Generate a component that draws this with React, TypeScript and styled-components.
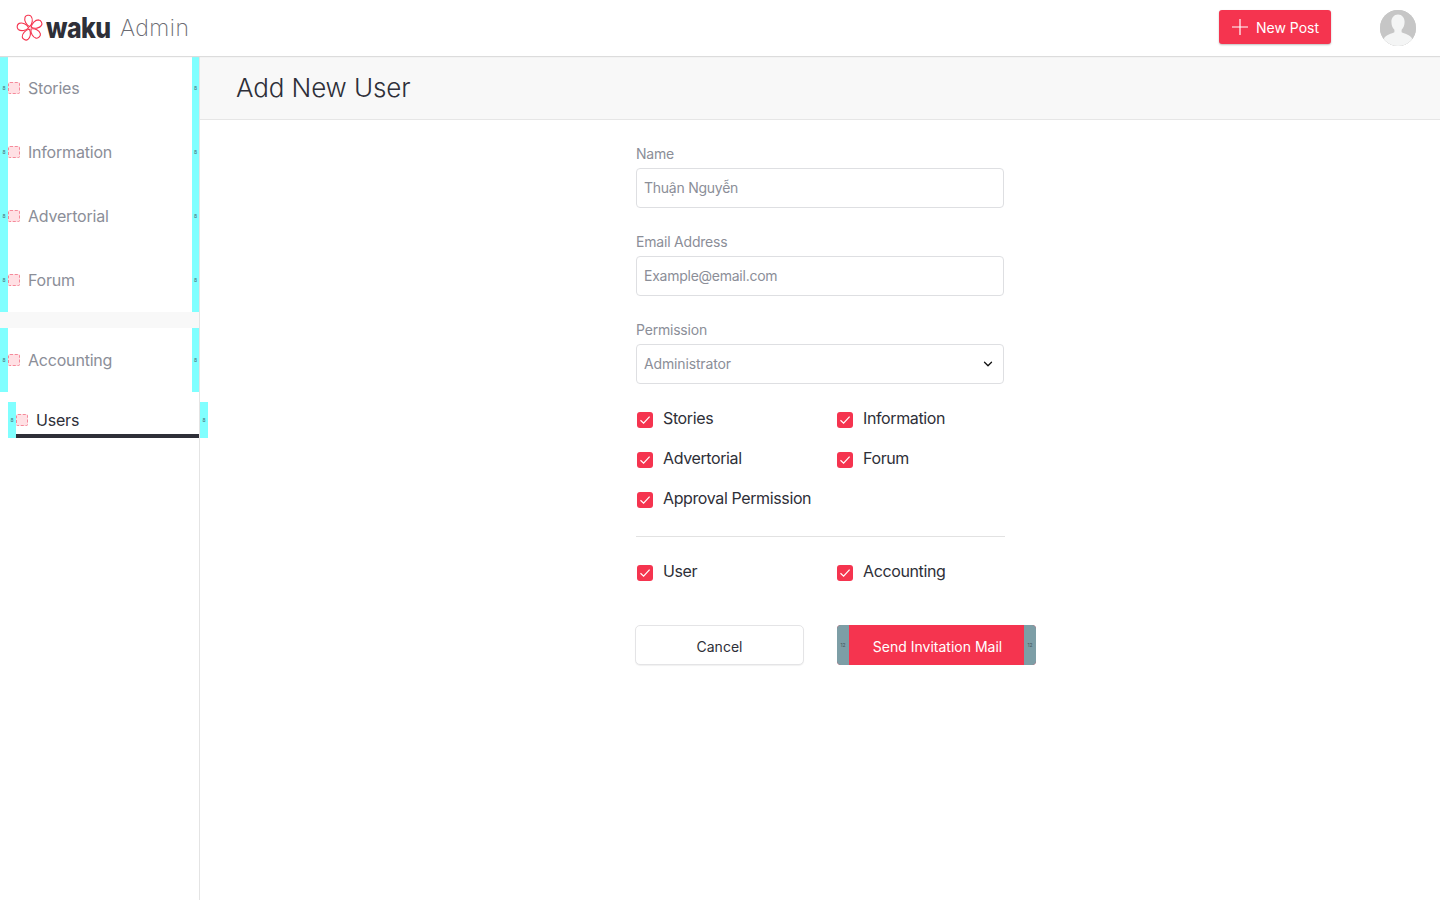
import React from 'react';
import styled, { createGlobalStyle } from 'styled-components';
import { ChevronDown } from 'lucide-react';

const RED = '#f5344f';
const INK = '#2e2f38';
const MUTED = '#8b8e98';

const GlobalStyle = createGlobalStyle`
  html, body { margin: 0; padding: 0; background: #fff; }
  body { font-family: Inter, "Noto Sans", sans-serif; color: ${INK}; }
  * { box-sizing: border-box; }
`;

const Page = styled.div`
  width: 1440px;
  height: 900px;
  display: flex;
  flex-direction: column;
  overflow: hidden;
`;

const Header = styled.header`
  height: 56px;
  flex: none;
  display: flex;
  align-items: center;
  padding: 0 24px 0 16px;
  background: #fff;
  position: relative;
  z-index: 2;
  box-shadow: 0 1px 1px #dcdcdc;
`;

const Brand = styled.div`
  display: flex;
  align-items: center;
`;

const Wordmark = styled.span`
  display: inline-block;
  width: 64px;
  margin-left: 2px;
  font-family: Inter, sans-serif;
  font-weight: 800;
  font-size: 29px;
  line-height: 32px;
  letter-spacing: -0.6px;
  color: ${INK};
  transform: scaleX(0.86);
  transform-origin: left center;
`;

const AdminMark = styled.span`
  font-family: Inter, sans-serif;
  font-weight: 200;
  font-size: 23px;
  line-height: 32px;
  letter-spacing: 0.45px;
  color: #6a6b72;
  margin-left: 10px;
`;

const NewPost = styled.button`
  margin: 0 0 2px auto;
  width: 112px;
  height: 34px;
  display: flex;
  align-items: center;
  gap: 8px;
  padding: 0 0 0 13px;
  border: none;
  border-radius: 3px;
  background: ${RED};
  color: #fff;
  font: 400 14px Inter, sans-serif;
  box-shadow: 0 1px 2px rgba(0, 0, 0, 0.25);
`;

const Avatar = styled.div`
  width: 36px;
  height: 36px;
  margin-left: 49px;
  border-radius: 50%;
  overflow: hidden;
  background: #c6c6c6;
`;

const Body = styled.div`
  flex: 1;
  display: flex;
  min-height: 0;
`;

const Sidebar = styled.nav`
  width: 200px;
  flex: none;
  border-right: 1px solid #e4e4e4;
  display: flex;
  flex-direction: column;
`;

const NavItem = styled.div`
  height: 64px;
  display: flex;
  align-items: stretch;
`;

const NavDivider = styled.div`
  height: 16px;
  background: #f8f8f8;
`;

const Gutter = styled.span<{ $width: number }>`
  width: ${p => p.$width}px;
  flex: none;
  background: #80ffff;
  color: #4a6f78;
  font-size: 5px;
  display: flex;
  align-items: center;
  justify-content: center;
`;

const IconSlot = styled.span`
  width: 12px;
  height: 12px;
  flex: none;
  align-self: center;
  background: #ffe0e4;
  border: 1px dashed #f58a9a;
  border-radius: 2px;
`;

const NavLabel = styled.span<{ $active?: boolean }>`
  flex: 1;
  align-self: center;
  margin-left: 8px;
  font-size: 16px;
  line-height: 20px;
  letter-spacing: -0.2px;
  color: ${p => (p.$active ? INK : MUTED)};
`;

const ActiveItem = styled.div`
  height: 36px;
  margin: 10px -9px 0 8px;
  display: flex;
  align-items: stretch;
`;

const ActiveInner = styled.div`
  flex: 1;
  display: flex;
  align-items: center;
  border-bottom: 4px solid ${INK};
  padding-top: 4px;
  margin-right: 1px;
`;

const Main = styled.main`
  flex: 1;
  min-width: 0;
`;

const TitleBar = styled.div`
  height: 64px;
  display: flex;
  align-items: center;
  padding-left: 36px;
  background: #f8f8f8;
  border-bottom: 1px solid #e6e6e6;
`;

const Title = styled.h1`
  margin: 0;
  font-size: 26px;
  font-weight: 300;
  line-height: 36px;
  letter-spacing: -0.12px;
  color: ${INK};
`;

const Form = styled.form`
  width: 368px;
  margin: 0 auto;
  padding-top: 24px;
`;

const Field = styled.div<{ $last?: boolean }>`
  margin-bottom: ${p => (p.$last ? 15 : 24)}px;
`;

const FieldLabel = styled.label`
  display: block;
  font-size: 14px;
  line-height: 20px;
  letter-spacing: -0.2px;
  margin-bottom: 4px;
  color: ${MUTED};
`;

const TextInput = styled.input`
  display: block;
  width: 100%;
  height: 40px;
  padding: 0 7px 2px;
  border: 1px solid #dedfe2;
  border-radius: 4px;
  background: #fff;
  font: 400 14px Inter, sans-serif;
  letter-spacing: -0.25px;
  color: ${MUTED};
  &::placeholder { color: ${MUTED}; opacity: 1; }
`;

const SelectWrap = styled.div`
  position: relative;
`;

const Select = styled.select`
  display: block;
  width: 100%;
  height: 40px;
  padding: 0 7px 2px;
  border: 1px solid #dedfe2;
  border-radius: 4px;
  background: #fff;
  font: 400 14px Inter, sans-serif;
  letter-spacing: -0.15px;
  color: ${MUTED};
  appearance: none;
`;

const SelectChevron = styled.span`
  position: absolute;
  right: 9px;
  top: 13px;
  display: flex;
  color: #111;
`;

const CheckGrid = styled.div`
  display: grid;
  grid-template-columns: 200px 168px;
  grid-auto-rows: 40px;
`;

const CheckItem = styled.label`
  display: flex;
  align-items: center;
  font-size: 16px;
  line-height: 20px;
  letter-spacing: -0.38px;
  color: ${INK};
`;

const CheckText = styled.span`
  margin-bottom: 2px;
`;

const CheckBox = styled.span`
  width: 16px;
  height: 16px;
  margin: 2px 10px 0 1px;
  flex: none;
  border-radius: 3px;
  background: ${RED};
  display: flex;
  align-items: center;
  justify-content: center;
`;

const Rule = styled.hr`
  width: 369px;
  height: 1px;
  margin: 17px 0 15px;
  border: none;
  background: #e2e2e2;
`;

const Actions = styled.div`
  display: flex;
  margin: 33px 0 0 -1px;
`;

const CancelButton = styled.button`
  width: 169px;
  flex: none;
  height: 40px;
  margin-right: 33px;
  padding: 2px 0 0;
  border: 1px solid #e4e4e6;
  border-radius: 5px;
  background: #fff;
  color: ${INK};
  font: 400 14px Inter, sans-serif;
  box-shadow: 0 1px 1px rgba(0, 0, 0, 0.06);
`;

const SendButton = styled.button`
  width: 199px;
  flex: none;
  height: 40px;
  padding: 0;
  display: flex;
  align-items: stretch;
  border: none;
  border-radius: 4px;
  overflow: hidden;
  background: ${RED};
  color: #fff;
  font: 400 14px Inter, sans-serif;
`;

const SendPad = styled.span`
  width: 12px;
  flex: none;
  background: #7d9ea6;
  color: #44585e;
  font-size: 5px;
  display: flex;
  align-items: center;
  justify-content: center;
`;

const SendLabel = styled.span`
  flex: 1;
  align-self: center;
  text-align: center;
  padding: 2px 0 0 2px;
`;

const Logo = () => (
  <svg width="28" height="28" viewBox="-15 -15 30 30" fill="none" stroke={RED} strokeWidth="1.2">
    {[0, 72, 144, 216, 288].map(a => (
      <path
        key={a}
        transform={`rotate(${a - 10})`}
        d="M0 -1.5C-3.6 -4 -5 -9 -3.3 -12.2C-2 -14.4 2 -14.4 3.3 -12.2C5 -9 3.6 -4 0 -1.5Z"
      />
    ))}
  </svg>
);

const PlusMark = () => (
  <svg width="16" height="16" viewBox="0 0 16 16" stroke="#fff" strokeWidth="1.2">
    <path d="M8 0v16M0 8h16" />
  </svg>
);

const Silhouette = () => (
  <svg width="36" height="36" viewBox="0 0 36 36">
    <rect width="36" height="36" fill="#c6c6c6" />
    <path
      d="M18 4.5c4 0 6.6 3.2 6.6 7.6 0 3.2-1.2 6-3 7.6v2.6c2.2 1.3 9 2.6 10.4 6.2V36H4v-7.5c1.4-3.6 8.2-4.9 10.4-6.2v-2.6c-1.8-1.6-3-4.4-3-7.6 0-4.4 2.6-7.6 6.6-7.6z"
      fill="#f4f5f5"
    />
  </svg>
);

const Tick = () => (
  <svg width="12" height="10" viewBox="0 0 12 10" fill="none" stroke="#fff" strokeWidth="1.2">
    <path d="M1.5 5.2 4.6 8.2 10.6 1.6" />
  </svg>
);

const topNav = ['Stories', 'Information', 'Advertorial', 'Forum'];

const Nav = ({ label }: { label: string }) => (
  <NavItem>
    <Gutter $width={8}>8</Gutter>
    <IconSlot />
    <NavLabel>{label}</NavLabel>
    <Gutter $width={7}>8</Gutter>
  </NavItem>
);

const Check = ({ label }: { label: string }) => (
  <CheckItem>
    <CheckBox>
      <Tick />
    </CheckBox>
    <CheckText>{label}</CheckText>
  </CheckItem>
);

const App = () => (
  <Page>
    <GlobalStyle />
    <Header>
      <Brand>
        <Logo />
        <Wordmark>waku</Wordmark>
        <AdminMark>Admin</AdminMark>
      </Brand>
      <NewPost type="button">
        <PlusMark />
        New Post
      </NewPost>
      <Avatar>
        <Silhouette />
      </Avatar>
    </Header>
    <Body>
      <Sidebar>
        {topNav.map(label => (
          <Nav key={label} label={label} />
        ))}
        <NavDivider />
        <Nav label="Accounting" />
        <ActiveItem>
          <Gutter $width={8}>8</Gutter>
          <ActiveInner>
            <IconSlot />
            <NavLabel $active>Users</NavLabel>
          </ActiveInner>
          <Gutter $width={8}>8</Gutter>
        </ActiveItem>
      </Sidebar>
      <Main>
        <TitleBar>
          <Title>Add New User</Title>
        </TitleBar>
        <Form>
          <Field>
            <FieldLabel>Name</FieldLabel>
            <TextInput placeholder="Thuận Nguyễn" />
          </Field>
          <Field>
            <FieldLabel>Email Address</FieldLabel>
            <TextInput placeholder="Example@email.com" />
          </Field>
          <Field $last>
            <FieldLabel>Permission</FieldLabel>
            <SelectWrap>
              <Select defaultValue="Administrator">
                <option>Administrator</option>
              </Select>
              <SelectChevron>
                <ChevronDown size={14} strokeWidth={2.2} />
              </SelectChevron>
            </SelectWrap>
          </Field>
          <CheckGrid>
            <Check label="Stories" />
            <Check label="Information" />
            <Check label="Advertorial" />
            <Check label="Forum" />
            <Check label="Approval Permission" />
          </CheckGrid>
          <Rule />
          <CheckGrid>
            <Check label="User" />
            <Check label="Accounting" />
          </CheckGrid>
          <Actions>
            <CancelButton type="button">Cancel</CancelButton>
            <SendButton type="button">
              <SendPad>12</SendPad>
              <SendLabel>Send Invitation Mail</SendLabel>
              <SendPad>12</SendPad>
            </SendButton>
          </Actions>
        </Form>
      </Main>
    </Body>
  </Page>
);

export default App;
